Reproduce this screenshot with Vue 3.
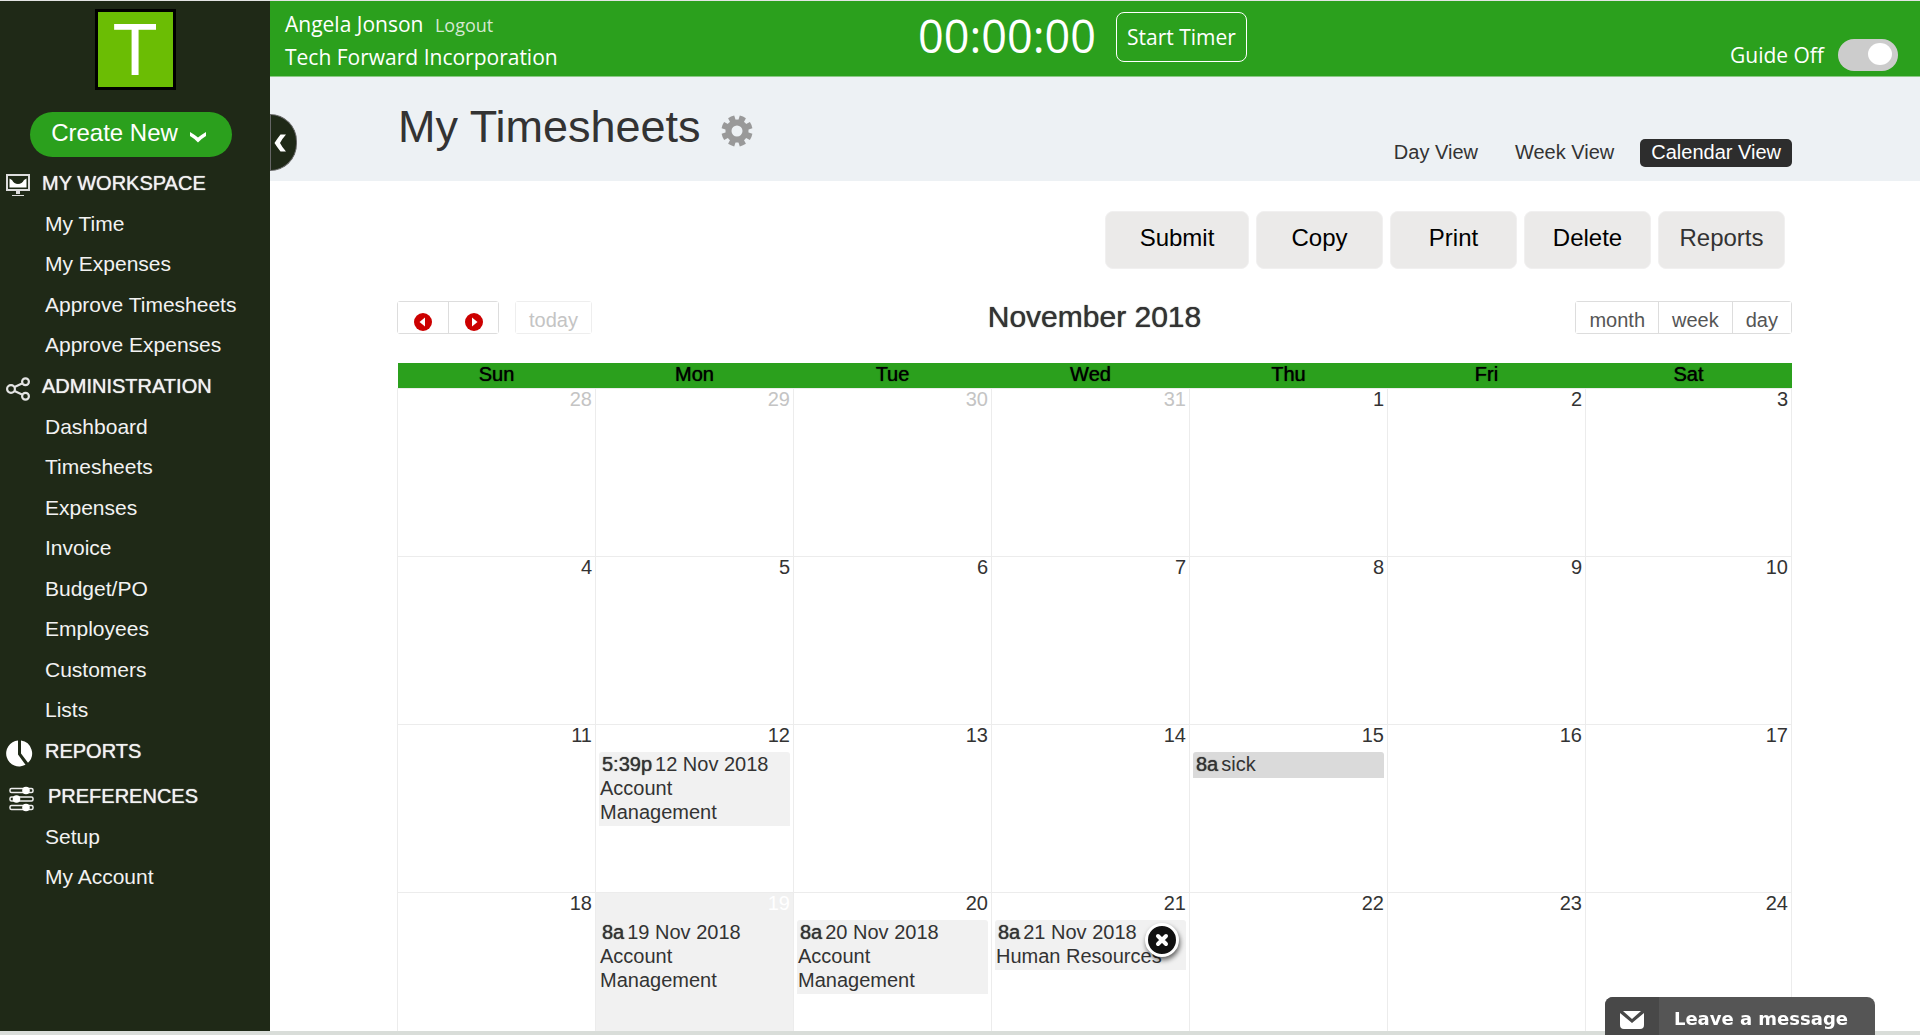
<template>
  <div class="app">
    <aside class="sidebar">
      <div class="logo">T</div>
      <button type="button" class="create-btn">
        <span>Create New</span>
        <svg width="18" height="12" viewBox="0 0 18 12" aria-hidden="true">
          <path d="M1 1 Q6 4 9 6.500 Q12 4 17 1 V5 Q12 8 9 11.500 Q6 8 1 5 Z" fill="#fff" />
        </svg>
      </button>

      <nav>
        <section v-for="group in menu" :key="group.title" class="menu-group">
          <h2 class="menu-title">
            <svg v-if="group.icon === 'monitor'" width="24" height="24" viewBox="0 0 24 24" aria-hidden="true">
              <rect x="1" y="1" width="22" height="15" fill="none" stroke="#ddd" stroke-width="2" />
              <path d="M3.500 4.500 L6 6 Q8 10 12 10 Q16 10 18 6 L20.500 4.500 V13.500 H3.500 Z" fill="#fff" />
              <path d="M10 17 h4 v3 h-4z M6 21 h12 v1 h-12z" fill="#ddd" />
            </svg>
            <svg v-else-if="group.icon === 'share'" width="24" height="24" viewBox="0 0 24 24" fill="none" stroke="#e4e4e4" stroke-width="2.200" aria-hidden="true">
              <circle cx="5" cy="12" r="3.900" />
              <circle cx="19.500" cy="4.700" r="3.400" />
              <circle cx="19.500" cy="19.300" r="3.400" />
              <path d="M8.500 10 L16 6.500 M8.500 14 L16 17.500" />
            </svg>
            <svg v-else-if="group.icon === 'pie'" width="27" height="27" viewBox="0 0 27 27" fill="#fff" aria-hidden="true">
              <path d="M12 0.500 A13 13 0 1 0 19.500 24.800 L12 14.500 Z" />
              <path d="M15 0.500 A13 13 0 0 1 22 22.800 L15 13.500 Z" />
            </svg>
            <svg v-else width="30" height="26" viewBox="0 0 30 26" aria-hidden="true">
              <g fill="none" stroke="#eee" stroke-width="1.500">
                <rect x="4" y="2.500" width="23" height="4" rx="1.500" />
                <rect x="4" y="11" width="23" height="4" rx="1.500" />
                <rect x="4" y="19.500" width="23" height="4" rx="1.500" />
              </g>
              <g fill="#fff">
                <circle cx="20" cy="4.500" r="3.800" />
                <circle cx="10.500" cy="13" r="3.800" />
                <circle cx="20" cy="21.500" r="3.800" />
              </g>
            </svg>
            <span>{{ group.title }}</span>
          </h2>
          <ul v-if="group.items.length">
            <li v-for="item in group.items" :key="item">
              <a href="#">{{ item }}</a>
            </li>
          </ul>
        </section>
      </nav>
    </aside>

    <div class="main">
      <button type="button" class="collapse-btn" aria-label="Collapse menu">
        <svg width="12" height="18" viewBox="0 0 12 18" aria-hidden="true">
          <path d="M6.500 0.500 H12 Q8 5 6 9 Q8 13 12 17.500 H6.500 Q3 13 0.500 9 Q3 5 6.500 0.500 Z" fill="#fff" />
        </svg>
      </button>

      <header class="topbar">
        <div class="account">
          <div>Angela Jonson <a href="#" class="logout">Logout</a></div>
          <div>Tech Forward Incorporation</div>
        </div>
        <div class="timer">
          <span class="timer-value">{{ clock }}</span>
          <button type="button" class="timer-btn">Start Timer</button>
        </div>
        <div class="guide">
          <label for="guide">Guide Off</label>
          <input id="guide" type="checkbox" class="switch" />
        </div>
      </header>

      <div class="page-head">
        <h1>My Timesheets</h1>
        <svg class="gear" width="32" height="32" viewBox="-16 -16 32 32" aria-hidden="true">
          <g fill="#999">
            <path v-for="n in 8" :key="n" d="M-2.800 -9 L-3.300 -15.300 Q0 -16 3.300 -15.300 L2.800 -9 Z" :transform="`rotate(${n * 45 - 22.5})`" />
          </g>
          <circle r="8.500" fill="none" stroke="#999" stroke-width="6" />
        </svg>
        <nav class="views">
          <a
            v-for="view in views"
            :key="view"
            href="#"
            :class="{ active: view === activeView }"
            @click.prevent="activeView = view"
          >{{ view }}</a>
        </nav>
      </div>

      <main class="content">
        <div class="actions">
          <button type="button" class="wide">Submit</button>
          <button type="button">Copy</button>
          <button type="button">Print</button>
          <button type="button">Delete</button>
          <button type="button" class="muted">Reports</button>
        </div>

        <div class="toolbar">
          <div class="toolbar-left">
            <div class="btn-group">
              <button type="button" class="arrow-btn" aria-label="Previous month">
                <svg width="18" height="18" viewBox="0 0 18 18" aria-hidden="true">
                  <circle cx="9" cy="9" r="9" fill="#c00" />
                  <path d="M11 4.500 V13.500 L5.500 9 Z" fill="#fff" />
                </svg>
              </button>
              <button type="button" class="arrow-btn" aria-label="Next month">
                <svg width="18" height="18" viewBox="0 0 18 18" aria-hidden="true">
                  <circle cx="9" cy="9" r="9" fill="#c00" />
                  <path d="M7 4.500 V13.500 L12.500 9 Z" fill="#fff" />
                </svg>
              </button>
            </div>
            <div class="btn-group">
              <button type="button" class="today-btn" disabled>today</button>
            </div>
          </div>
          <h2>November 2018</h2>
          <div class="toolbar-right">
            <div class="btn-group">
              <button type="button">month</button>
              <button type="button">week</button>
              <button type="button">day</button>
            </div>
          </div>
        </div>

        <table class="calendar">
          <thead>
            <tr>
              <th v-for="day in weekdays" :key="day" scope="col">{{ day }}</th>
            </tr>
          </thead>
          <tbody>
            <tr v-for="(week, i) in weeks" :key="i">
              <td
                v-for="day in week"
                :key="day"
                :class="{ other: i === 0 && day > 7, today: day === today }"
              >
                <div class="day-number">{{ day }}</div>
                <div v-if="eventFor(i, day)" class="event" :class="eventFor(i, day).type">
                  <span class="event-time">{{ eventFor(i, day).time }}</span>{{ eventFor(i, day).text }}
                  <div v-if="eventFor(i, day).task">{{ eventFor(i, day).task }}</div>
                  <button v-if="eventFor(i, day).closable" type="button" class="event-close" aria-label="Delete entry">
                    <svg width="14" height="14" viewBox="0 0 14 14" aria-hidden="true">
                      <path d="M3 3 L11 11 M11 3 L3 11" stroke="#fff" stroke-width="4" stroke-linecap="round" />
                    </svg>
                  </button>
                </div>
              </td>
            </tr>
          </tbody>
        </table>
      </main>
    </div>

    <button type="button" class="chat">
      <span class="chat-icon">
        <svg width="24" height="18" viewBox="0 0 24 18" aria-hidden="true">
          <path d="M3 0 H21 L12 8 Z" fill="#fff" />
          <path d="M0 2 L12 12 L24 2 V14 Q24 18 20 18 H4 Q0 18 0 14 Z" fill="#fff" />
        </svg>
      </span>
      <span class="chat-label">Leave a message</span>
    </button>
  </div>
</template>

<script setup>
import { ref } from 'vue'

const menu = [
  {
    title: 'MY WORKSPACE',
    icon: 'monitor',
    items: ['My Time', 'My Expenses', 'Approve Timesheets', 'Approve Expenses']
  },
  {
    title: 'ADMINISTRATION',
    icon: 'share',
    items: ['Dashboard', 'Timesheets', 'Expenses', 'Invoice', 'Budget/PO', 'Employees', 'Customers', 'Lists']
  },
  { title: 'REPORTS', icon: 'pie', items: [] },
  { title: 'PREFERENCES', icon: 'sliders', items: ['Setup', 'My Account'] }
]

const views = ['Day View', 'Week View', 'Calendar View']
const activeView = ref('Calendar View')
const clock = ref('00:00:00')
const today = 19

const weekdays = ['Sun', 'Mon', 'Tue', 'Wed', 'Thu', 'Fri', 'Sat']
const weeks = [
  [28, 29, 30, 31, 1, 2, 3],
  [4, 5, 6, 7, 8, 9, 10],
  [11, 12, 13, 14, 15, 16, 17],
  [18, 19, 20, 21, 22, 23, 24]
]

const events = {
  12: { time: '5:39p', text: '12 Nov 2018', task: 'Account Management' },
  15: { time: '8a', text: 'sick', type: 'leave' },
  19: { time: '8a', text: '19 Nov 2018', task: 'Account Management' },
  20: { time: '8a', text: '20 Nov 2018', task: 'Account Management' },
  21: { time: '8a', text: '21 Nov 2018', task: 'Human Resources', closable: true }
}

// the first row also holds days of the previous month
const eventFor = (row, day) => (row > 0 ? events[day] : undefined)
</script>

<style>
body {
  margin: 0;
}
</style>

<style scoped>
.app {
  display: flex;
  box-sizing: border-box;
  height: 100vh;
  overflow: hidden;
  border-top: 1px solid #e4e4e4;
  border-bottom: 4px solid #d9ddd9;
  background: #fff;
  color: #333;
  font-family: "Liberation Sans", Arial, sans-serif;
  font-size: 20px;
}

button {
  font-family: inherit;
  cursor: pointer;
}

a {
  color: inherit;
  text-decoration: none;
}

h1,
h2,
ul {
  margin: 0;
  padding: 0;
  font-weight: normal;
  list-style: none;
}

/* sidebar */
.sidebar {
  flex: none;
  width: 270px;
  background: #1f2917;
  color: #f2f2f2;
  font-size: 21px;
}

.logo {
  box-sizing: border-box;
  width: 81px;
  height: 81px;
  margin: 8px auto 22px;
  border: 3px solid #000;
  background: #6bbd04;
  color: #fff;
  font-size: 74px;
  line-height: 75px;
  text-align: center;
}

.create-btn {
  display: flex;
  align-items: center;
  justify-content: center;
  gap: 11px;
  width: 202px;
  height: 45px;
  margin-left: 30px;
  padding: 0 4px 4px 0;
  border: 0;
  border-radius: 23px;
  background: #2ba01d;
  color: #fff;
  font-size: 24px;
}

.create-btn svg {
  margin-top: 8px;
}

.sidebar nav {
  margin-top: 6px;
}

.menu-title {
  display: flex;
  align-items: center;
  gap: 12px;
  height: 41px;
  padding-left: 6px;
  font-size: 20px;
  text-shadow: 0 0 1px #f2f2f2;
}

.menu-title svg {
  margin-top: 4px;
}

.menu-group:last-child {
  margin-top: 4px;
}

.menu-group li {
  height: 40px;
  padding-left: 45px;
  line-height: 40px;
}

.menu-group li:nth-child(even) {
  margin-bottom: 1px;
}

/* main column */
.main {
  position: relative;
  flex: 1;
  min-width: 0;
}

.collapse-btn {
  position: absolute;
  top: 113px;
  left: 0;
  display: flex;
  align-items: center;
  width: 27px;
  height: 57px;
  padding: 0 0 0 3px;
  border: 1px solid #666;
  border-radius: 0 28px 28px 0;
  background: #1f2917;
}

.topbar {
  display: grid;
  grid-template-columns: 1fr auto 1fr;
  box-sizing: border-box;
  height: 76px;
  padding: 0 22px 0 15px;
  border-bottom: 1px solid #8cc986;
  background: #2ba01d;
  color: #fff;
  font-family: "Open Sans", "Noto Sans", sans-serif;
  font-size: 21px;
}

.account {
  padding-top: 7px;
  line-height: 32px;
}

.logout {
  margin-left: 6px;
  color: #d5e8d2;
  font-size: 18px;
}

.timer {
  display: flex;
  align-items: flex-start;
  gap: 20px;
  padding-right: 18px;
}

.timer-value {
  font-size: 45px;
  line-height: 70px;
}

.timer-btn {
  width: 131px;
  height: 50px;
  margin-top: 11px;
  padding: 0;
  border: 1px solid #fff;
  border-radius: 8px;
  background: transparent;
  color: #fff;
  font-size: 21px;
}

.guide {
  display: flex;
  align-items: center;
  justify-content: flex-end;
  gap: 14px;
  padding-top: 33px;
}

.switch {
  appearance: none;
  box-sizing: border-box;
  display: flex;
  align-items: center;
  justify-content: flex-end;
  width: 60px;
  height: 32px;
  margin: 0;
  padding: 0 6px 2px;
  border-radius: 16px;
  background: #ccc;
}

.switch::before {
  content: "";
  width: 24px;
  height: 22px;
  border-radius: 50%;
  background: #fff;
}

.page-head {
  display: flex;
  align-items: flex-start;
  box-sizing: border-box;
  height: 104px;
  padding: 0 128px;
  background: #edf1f4;
}

.page-head h1 {
  padding-top: 24px;
  font-size: 45px;
  line-height: 52px;
}

.gear {
  margin: 38px 0 0 20px;
}

.views {
  display: flex;
  gap: 15px;
  margin: 62px 0 0 auto;
  line-height: 26px;
}

.views a {
  padding: 0 11px 2px;
}

.views .active {
  border-radius: 5px;
  background: #2d2d2d;
  color: #fff;
}

.content {
  padding: 30px 128px 0 127px;
}

.actions {
  display: flex;
  justify-content: flex-end;
  gap: 7px;
  padding-right: 7px;
}

.actions button {
  width: 127px;
  height: 58px;
  padding: 0 0 5px;
  border: 1px solid #f1f0f0;
  border-radius: 8px;
  background: #ebeae9;
  color: #000;
  font-size: 24px;
}

.actions .wide {
  width: 144px;
}

.actions .muted {
  color: #333;
}

.toolbar {
  display: grid;
  grid-template-columns: 1fr auto 1fr;
  align-items: center;
  margin: 32px 0 29px;
}

.toolbar h2 {
  font-size: 30px;
  line-height: 32px;
  padding-bottom: 1px;
  text-shadow: 0 0 1px #333;
}

.toolbar-left {
  display: flex;
  gap: 16px;
}

.toolbar-right {
  display: flex;
  justify-content: flex-end;
}

.btn-group {
  display: flex;
  border: 1px solid #ddd;
  border-radius: 3px;
}

.btn-group:has(:disabled) {
  border-color: #eee;
}

.btn-group button {
  height: 31px;
  padding: 5px 13px 0;
  border: 0;
  background: #fff;
  color: #555;
  font-size: 20px;
}

.btn-group button + button {
  border-left: 1px solid #ddd;
}

.btn-group .arrow-btn {
  display: flex;
  align-items: center;
  justify-content: center;
  width: 50px;
  padding: 9px 0 0;
}

.btn-group .today-btn {
  color: #c4c4c4;
}

/* calendar */
.calendar {
  width: 100%;
  border-collapse: collapse;
  table-layout: fixed;
}

.calendar th {
  height: 25px;
  padding: 0;
  background: #2ba01d;
  color: #000;
  font-weight: normal;
  line-height: 23px;
  vertical-align: top;
  text-shadow: 0 0 1px #000;
}

.calendar th:last-child {
  width: 206px;
}

.calendar td {
  box-sizing: border-box;
  height: 168px;
  padding: 0 3px;
  border: 1px solid #ececec;
  vertical-align: top;
}

.day-number {
  height: 27px;
  line-height: 20px;
  text-align: right;
}

.other .day-number {
  color: #c4c4c4;
}

.today {
  background: #f1f1f1;
}

.today .day-number {
  color: #fff;
}

.event {
  position: relative;
  min-height: 24px;
  padding: 0 1px 2px;
  border-radius: 3px 3px 0 0;
  background: #f1f1f1;
  line-height: 24px;
}

.event.leave {
  background: #dadada;
}

.event-time {
  margin: 0 3px 0 2px;
  text-shadow: 0 0 1px #333;
}

.event-close {
  position: absolute;
  top: 3px;
  right: 7px;
  display: flex;
  align-items: center;
  justify-content: center;
  width: 34px;
  height: 34px;
  padding: 0;
  border: 3px solid #fff;
  border-radius: 50%;
  background: #111;
  box-shadow: 1px 3px 5px rgba(0, 0, 0, 0.6);
}

.chat {
  position: fixed;
  right: 45px;
  bottom: 0;
  display: flex;
  height: 38px;
  padding: 0;
  overflow: hidden;
  border: 0;
  border-radius: 8px 8px 0 0;
  background: #555;
  color: #fff;
}

.chat-icon {
  display: flex;
  align-items: center;
  justify-content: center;
  width: 54px;
  height: 38px;
  padding-top: 4px;
  background: #484848;
}

.chat-label {
  padding: 0 27px 0 15px;
  font-family: "DejaVu Sans", Verdana, sans-serif;
  font-size: 18px;
  font-weight: bold;
  line-height: 44px;
}
</style>
